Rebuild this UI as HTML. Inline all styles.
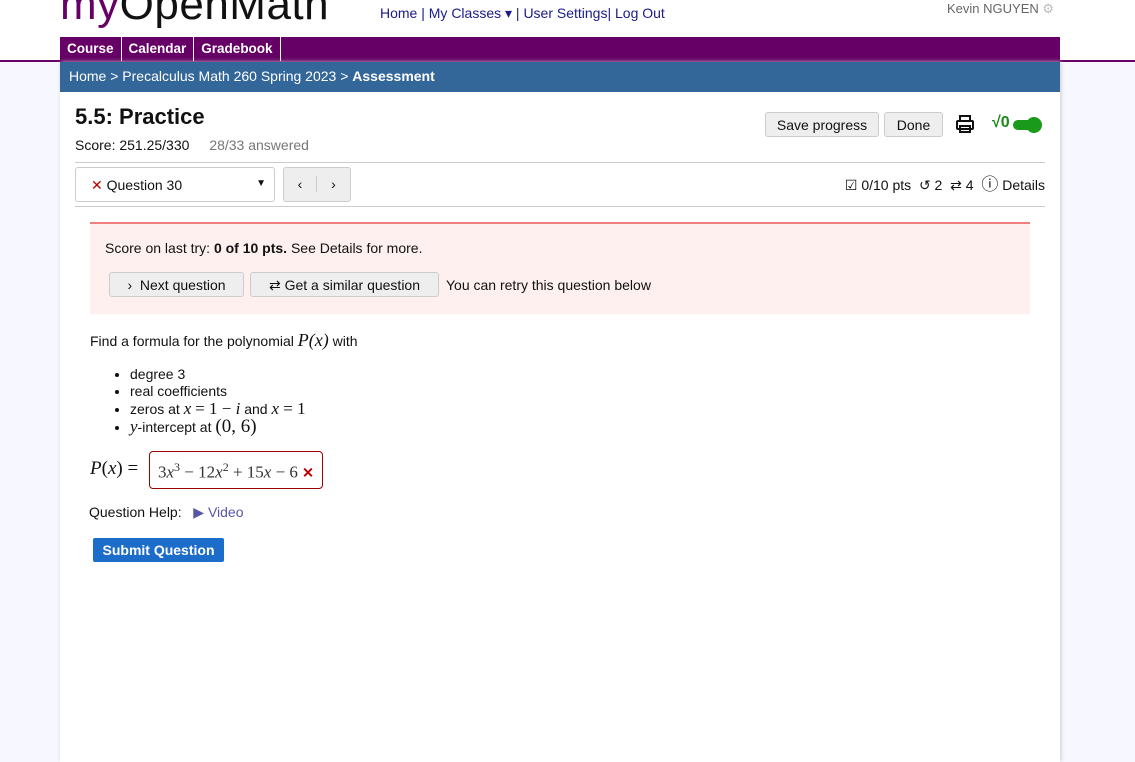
<!DOCTYPE html>
<html><head><style>
*{box-sizing:border-box;margin:0;padding:0}
body{width:1135px;height:720px;overflow:hidden;background:#f7f7ff;font-family:"Liberation Sans",sans-serif;font-size:14px;color:#111;position:relative}
.top{position:absolute;left:0;top:0;width:1135px;height:62px;background:#fff;border-bottom:2px solid #606;}
.logo{position:absolute;left:60px;top:-20px;font-size:44px;color:#111;font-weight:300;letter-spacing:0.5px}
.nav{position:absolute;left:380px;top:5px;color:#1a1a8a;font-size:14px}
.user{position:absolute;left:947px;top:1px;color:#666;font-size:13px}
.purple{position:absolute;left:60px;top:37px;width:1000px;height:24px;background:#606;}
.purple a{float:left;color:#fff;font-weight:bold;font-size:13.5px;padding:4px 7px;border-right:1px solid #fff;height:24px}
.page{position:absolute;left:60px;top:62px;width:1000px;height:700px;background:#fff;box-shadow:1px 0 4px #ccc}
.bc{height:30px;background:#336699;color:#fff;padding:6px 9px;font-size:14px}
.abs{position:absolute}
.btn{position:absolute;background:#eee;border:1px solid #ccc;border-radius:3px;font-size:14px;text-align:center;color:#111}
.hr{position:absolute;left:15px;width:970px;height:1px;background:#ccc}
</style></head><body>
<div class="top">
<div class="logo"><span style="color:#606">my</span>OpenMath</div>
<div class="nav">Home | My Classes ▾ | User Settings| Log Out</div>
<div class="user">Kevin NGUYEN <span style="color:#bbb">⚙</span></div>
</div>
<div class="purple"><a>Course</a><a>Calendar</a><a>Gradebook</a></div>
<div class="page">
<div class="bc">Home &gt; Precalculus Math 260 Spring 2023 &gt; <b>Assessment</b></div>
<div class="abs" style="left:15px;top:42px;font-size:22px;font-weight:bold">5.5: Practice</div>
<div class="abs" style="left:15px;top:75px;font-size:14px">Score: 251.25/330 <span style="color:#777;margin-left:16px">28/33 answered</span></div>
<div class="btn" style="left:705px;top:50px;width:114px;height:25px;padding-top:4px">Save progress</div>
<div class="btn" style="left:824px;top:50px;width:59px;height:25px;padding-top:4px">Done</div>
<svg class="abs" style="left:895px;top:52px" width="20" height="20" viewBox="0 0 20 20" fill="none" stroke="#111" stroke-width="2"><rect x="5" y="2" width="10" height="5"/><rect x="2" y="7" width="16" height="8" rx="1"/><rect x="5" y="12" width="10" height="6"/></svg>
<div class="abs" style="left:932px;top:52px;color:#1a8a1a;font-weight:bold;font-size:16px">√0</div>
<div class="abs" style="left:953px;top:58px;width:26px;height:10px;background:#1a9a1a;border-radius:5px"></div>
<div class="abs" style="left:966px;top:55px;width:16px;height:16px;background:#1a9a1a;border-radius:50%"></div>
<div class="hr" style="top:100px"></div>
<div class="abs" style="left:15px;top:105px;width:200px;height:35px;border:1px solid #ccc;border-radius:3px;padding:9px 15px;font-size:14px"><span style="color:#b00">✕</span> Question 30<span style="position:absolute;right:8px;top:10px;font-size:10px">▼</span></div>
<div class="btn" style="left:223px;top:105px;width:68px;height:35px;padding-top:8px"><span style="display:inline-block;width:33px;border-right:1px solid #ccc">‹</span><span style="display:inline-block;width:33px">›</span></div>
<div class="abs" style="right:15px;top:114px;font-size:14px;line-height:18px;white-space:nowrap">☑ 0/10 pts &nbsp;↺ 2 &nbsp;⇄ 4 &nbsp;<span style="font-size:17px;line-height:14px">ⓘ</span> Details</div>
<div class="hr" style="top:144px"></div>
<div class="abs" style="left:30px;top:160px;width:940px;height:92px;background:#fff0f0;border-top:2px solid #f08080"></div>
<div class="abs" style="left:45px;top:178px;font-size:14px">Score on last try: <b>0 of 10 pts.</b> See Details for more.</div>
<div class="btn" style="left:49px;top:210px;width:135px;height:25px;padding-top:4px">› &nbsp;Next question</div>
<div class="btn" style="left:190px;top:210px;width:189px;height:25px;padding-top:4px">⇄ Get a similar question</div>
<div class="abs" style="left:386px;top:215px">You can retry this question below</div>
<div class="abs" style="left:30px;top:268px;font-size:14px">Find a formula for the polynomial <i style="font-family:'Liberation Serif',serif;font-size:18px">P(x)</i> with</div>
<ul class="abs" style="left:70px;top:304px;font-size:14px;line-height:17px">
<li>degree 3</li><li>real coefficients</li>
<li>zeros at <i style="font-family:'Liberation Serif',serif;font-size:17px">x</i> <span style="font-family:'Liberation Serif',serif;font-size:17px">= 1 − <i>i</i></span> and <i style="font-family:'Liberation Serif',serif;font-size:17px">x</i><span style="font-family:'Liberation Serif',serif;font-size:17px"> = 1</span></li>
<li><i style="font-family:'Liberation Serif',serif;font-size:17px">y</i>-intercept at <span style="font-family:'Liberation Serif',serif;font-size:19px">(0, 6)</span></li>
</ul>
<div class="abs" style="left:30px;top:396px;font-family:'Liberation Serif',serif;font-size:19px"><i>P</i>(<i>x</i>) =</div>
<div class="abs" style="left:89px;top:389px;width:174px;height:38px;border:1px solid #900;border-radius:4px;padding:8px 8px;font-family:'Liberation Serif',serif;font-size:17px;color:#333">3<i>x</i><sup style="font-size:12px">3</sup> − 12<i>x</i><sup style="font-size:12px">2</sup> + 15<i>x</i> − 6 <span style="color:#b00;font-family:'Liberation Sans';font-weight:bold;font-size:14px">✕</span></div>
<div class="abs" style="left:29px;top:442px">Question Help: &nbsp; <span style="color:#5555aa">▶ Video</span></div>
<div class="abs" style="left:33px;top:476px;width:131px;height:24px;background:#1c6dc9;color:#fff;border-radius:2px;font-weight:bold;text-align:center;padding-top:4px">Submit Question</div>
</div>
</body></html>
